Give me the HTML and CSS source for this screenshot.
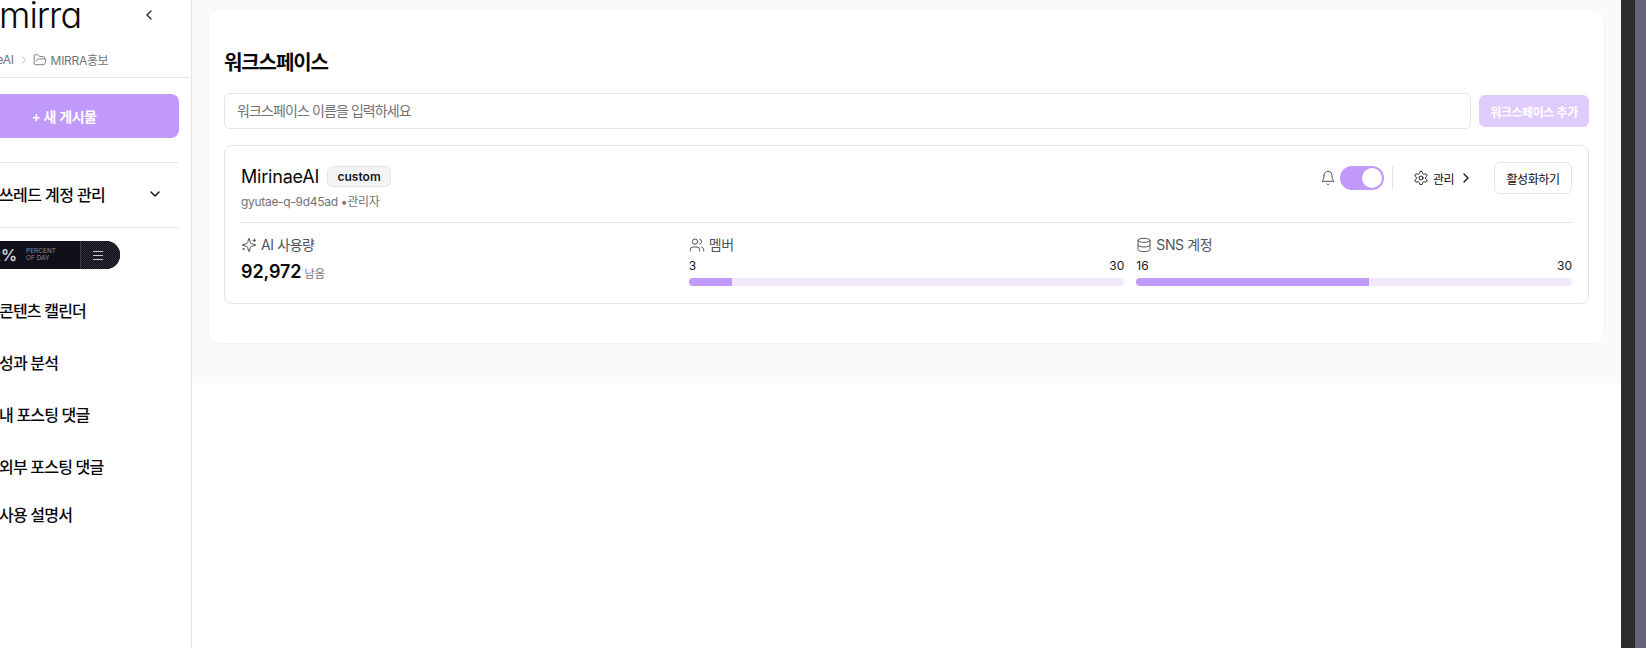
FILE: index.html
```html
<!DOCTYPE html>
<html lang="ko">
<head>
<meta charset="utf-8">
<title>워크스페이스</title>
<link rel="stylesheet" href="styles.css">
</head>
<body>
<div class="app">
  <aside class="sidebar">
    <div class="side-inner">
      <div class="logo-row">
        <span class="logo">mirra</span>
        <svg class="ico-chev-left" viewBox="0 0 24 24"><path d="M15 18l-6-6 6-6"/></svg>
      </div>
      <div class="crumbs">
        <span>MirinaeAI</span>
        <svg class="crumb-sep" viewBox="0 0 24 24"><path d="M9 18l6-6-6-6"/></svg>
        <svg class="crumb-folder" viewBox="0 0 24 24"><path d="M6 14l1.5-2.9A2 2 0 0 1 9.24 10H20a2 2 0 0 1 1.94 2.5l-1.54 6a2 2 0 0 1-1.95 1.5H4a2 2 0 0 1-2-2V5a2 2 0 0 1 2-2h3.9a2 2 0 0 1 1.69.9l.81 1.2a2 2 0 0 0 1.67.9H18a2 2 0 0 1 2 2v2"/></svg>
        <span>MIRRA홍보</span>
      </div>
      <div class="side-body">
        <button class="new-post">+ 새 게시물</button>
        <div class="thread-row">
          <span>쓰레드 계정 관리</span>
          <svg class="ico-chev-down" viewBox="0 0 24 24"><path d="M6 9l6 6 6-6"/></svg>
        </div>
        <div class="meter">
          <span class="meter-value">62%</span>
          <span class="meter-label">PERCENT<br>OF DAY</span>
          <span class="meter-menu"><i></i><i></i><i></i></span>
        </div>
        <nav class="nav">
          <a class="nav-item nav-a">콘텐츠 캘린더</a>
          <a class="nav-item nav-b">성과 분석</a>
          <a class="nav-item nav-b">내 포스팅 댓글</a>
          <a class="nav-item nav-b">외부 포스팅 댓글</a>
          <a class="nav-item nav-c">사용 설명서</a>
        </nav>
      </div>
    </div>
  </aside>

  <div class="content">
    <main class="main">
      <section class="panel">
        <h1 class="title">워크스페이스</h1>
        <div class="add-row">
          <div class="name-input">워크스페이스 이름을 입력하세요</div>
          <button class="add-btn">워크스페이스 추가</button>
        </div>
        <article class="ws-card">
          <header class="ws-head">
            <div class="ws-info">
              <div class="ws-name-row">
                <span class="ws-name">MirinaeAI</span>
                <span class="badge">custom</span>
              </div>
              <div class="ws-sub">gyutae-q-9d45ad •관리자</div>
            </div>
            <div class="ws-actions">
              <svg class="ico-16" viewBox="0 0 24 24"><path d="M6 8a6 6 0 0 1 12 0c0 7 3 9 3 9H3s3-2 3-9"/><path d="M10.3 21a1.94 1.94 0 0 0 3.4 0"/></svg>
              <span class="toggle"><span class="knob"></span></span>
              <span class="vsep"></span>
              <span class="manage">
                <svg class="ico-16 dark" viewBox="0 0 24 24"><path d="M12.22 2h-.44a2 2 0 0 0-2 2v.18a2 2 0 0 1-1 1.73l-.43.25a2 2 0 0 1-2 0l-.15-.08a2 2 0 0 0-2.73.73l-.22.38a2 2 0 0 0 .73 2.73l.15.1a2 2 0 0 1 1 1.72v.51a2 2 0 0 1-1 1.74l-.15.09a2 2 0 0 0-.73 2.73l.22.38a2 2 0 0 0 2.73.73l.15-.08a2 2 0 0 1 2 0l.43.25a2 2 0 0 1 1 1.73V20a2 2 0 0 0 2 2h.44a2 2 0 0 0 2-2v-.18a2 2 0 0 1 1-1.73l.43-.25a2 2 0 0 1 2 0l.15.08a2 2 0 0 0 2.73-.73l.22-.39a2 2 0 0 0-.73-2.73l-.15-.08a2 2 0 0 1-1-1.74v-.5a2 2 0 0 1 1-1.74l.15-.09a2 2 0 0 0 .73-2.73l-.22-.38a2 2 0 0 0-2.73-.73l-.15.08a2 2 0 0 1-2 0l-.43-.25a2 2 0 0 1-1-1.73V4a2 2 0 0 0-2-2z"/><circle cx="12" cy="12" r="3"/></svg>
                <span class="manage-text">관리</span>
                <svg class="ico-chev-right" viewBox="0 0 24 24"><path d="M9 18l6-6-6-6"/></svg>
              </span>
              <button class="activate">활성화하기</button>
            </div>
          </header>
          <div class="stats">
            <div class="stat">
              <div class="stat-label">
                <svg class="ico-16" viewBox="0 0 24 24"><path d="M9.94 15.5A2 2 0 0 0 8.5 14.06l-6.14-1.58a.5.5 0 0 1 0-.96L8.5 9.94A2 2 0 0 0 9.94 8.5l1.58-6.14a.5.5 0 0 1 .96 0l1.58 6.14a2 2 0 0 0 1.44 1.44l6.14 1.58a.5.5 0 0 1 0 .96l-6.14 1.58a2 2 0 0 0-1.44 1.44l-1.58 6.14a.5.5 0 0 1-.96 0z"/><path d="M20 3v4M22 5h-4M4 17v2M5 18H3"/></svg>
                <span>AI 사용량</span>
              </div>
              <div class="usage"><b>92,972</b> <span>남음</span></div>
            </div>
            <div class="stat">
              <div class="stat-label">
                <svg class="ico-16" viewBox="0 0 24 24"><path d="M16 21v-2a4 4 0 0 0-4-4H6a4 4 0 0 0-4 4v2"/><circle cx="9" cy="7" r="4"/><path d="M22 21v-2a4 4 0 0 0-3-3.87M16 3.13a4 4 0 0 1 0 7.75"/></svg>
                <span>멤버</span>
              </div>
              <div class="bar-nums"><span>3</span><span>30</span></div>
              <div class="bar"><div class="bar-fill" style="width:10%"></div></div>
            </div>
            <div class="stat">
              <div class="stat-label">
                <svg class="ico-16" viewBox="0 0 24 24"><ellipse cx="12" cy="5" rx="9" ry="3"/><path d="M3 5v14a9 3 0 0 0 18 0V5"/><path d="M3 12a9 3 0 0 0 18 0"/></svg>
                <span>SNS 계정</span>
              </div>
              <div class="bar-nums"><span>16</span><span>30</span></div>
              <div class="bar"><div class="bar-fill" style="width:53.33%"></div></div>
            </div>
          </div>
        </article>
      </section>
    </main>
  </div>

  <div class="edge-dark"></div>
  <div class="edge-slate"></div>
</div>
</body>
</html>
```

FILE: styles.css
```css
* { box-sizing: border-box; }
html, body { margin: 0; height: 100%; background: #fff; overflow: hidden; }
body {
  font-family: Inter, "Noto Sans CJK KR", sans-serif;
  color: #09090b;
}
svg { fill: none; stroke: currentColor; stroke-width: 2; stroke-linecap: round; stroke-linejoin: round; flex-shrink: 0; }
button { font-family: inherit; cursor: pointer; }

.app { display: flex; height: 648px; width: 1646px; }

/* sidebar: its left part is scrolled out of the window */
.sidebar {
  width: 192px; flex-shrink: 0; height: 648px; overflow: hidden;
  border-right: 1px solid #e4e4e7; background: #fff;
}
.side-inner { width: 254px; margin-left: -63px; }
.logo-row {
  height: 46px; display: flex; align-items: flex-start;
  padding-left: 62px;
}
.logo {
  font-size: 36px; font-weight: 300; line-height: 30px; height: 30px;
  font-feature-settings: "cv11" 1; letter-spacing: -1px; color: #09090b;
}
.ico-chev-left { width: 16px; height: 16px; stroke: #27272a; margin-left: 60px; margin-top: 7px; }
.crumbs {
  height: 32px; display: flex; align-items: center; font-size: 12px; color: #71717a;
  letter-spacing: -0.3px;
  border-bottom: 1px solid #e4e4e7; width: 253px; padding: 0 0 4px 26px;
}
.crumb-sep { width: 12px; height: 12px; margin: 0 3px 0 4px; stroke: #a1a1aa; stroke-width: 1.5; }
.crumb-folder { width: 14px; height: 14px; margin-right: 4px; stroke-width: 1.5; }
.side-body { padding: 16px 12px 0 12px; width: 254px; }
.new-post {
  display: block; width: 230px; height: 44px; border: 0; border-radius: 8px;
  background: #c199fa; color: #fff; font-size: 14px; font-weight: 600; letter-spacing: -0.4px;
}
.thread-row {
  margin-top: 24px; width: 230px; height: 66px; padding: 0 16px 3px 50px;
  border-top: 1px solid #e4e4e7; border-bottom: 1px solid #e4e4e7;
  display: flex; align-items: center; justify-content: space-between;
  font-size: 16px; font-weight: 500; letter-spacing: -0.6px;
}
.ico-chev-down { width: 16px; height: 16px; }
.meter {
  margin: 13px 0 0 0; width: 171px; height: 28px; border-radius: 0 14px 14px 0;
  background: #10101a; display: flex; align-items: center; color: #fff;
}
.meter-value { width: 68px; text-align: right; font-size: 16px; font-weight: 600; color: #d4d4d8; }
.meter-label { margin-left: 9px; width: 54px; font-size: 6.5px; line-height: 7px; color: #8b8b94; }
.meter-menu {
  width: 40px; height: 28px; border-left: 1px solid #3c3c46; border-radius: 0 14px 14px 0;
  display: flex; flex-direction: column; justify-content: center; align-items: center; gap: 3px;
  padding-right: 5px;
  background: repeating-conic-gradient(#10101a 0 25%, #2c2c36 0 50%) 0 0 / 2px 2px;
}
.meter-menu i { display: block; width: 10px; height: 1px; background: #c8c8d0; }

.nav { display: flex; flex-direction: column; margin-left: 50px; }
.nav-item { font-size: 16px; font-weight: 500; line-height: 24px; color: #09090b; display: block; letter-spacing: -0.8px; }
.nav-a { margin-top: 30px; }
.nav-b { margin-top: 28px; }
.nav-c { margin-top: 24px; }

/* main */
.content { width: 1429px; flex-shrink: 0; }
.main { background: #fafafa; height: 383px; padding: 9px 16px 0; }
.panel {
  background: #fff; border: 1px solid #f4f4f5; border-radius: 12px;
  height: 335px; padding: 0 15px;
}
.title { margin: 41px 0 0; font-size: 20px; font-weight: 600; line-height: 24px; height: 24px; color: #09090b; letter-spacing: -1.1px; }
.add-row { display: flex; align-items: center; gap: 8px; margin-top: 18px; }
.name-input {
  flex: 1; height: 36px; border: 1px solid #e4e4e7; border-radius: 6px;
  padding: 0 12px; font-size: 14px; line-height: 34px; color: #71717a; letter-spacing: -0.9px;
}
.add-btn {
  width: 110px; height: 32px; border: 0; border-radius: 6px; background: #e0ccfc;
  color: #fff; font-size: 12px; font-weight: 600; padding: 0; letter-spacing: -0.4px;
}
.ws-card {
  margin-top: 16px; border: 1px solid #e4e4e7; border-radius: 8px;
  height: 159px; padding: 0 16px;
}
.ws-head {
  height: 77px; border-bottom: 1px solid #e4e4e7;
  display: flex; justify-content: space-between; align-items: flex-start;
}
.ws-name-row { display: flex; align-items: center; gap: 8px; margin-top: 20px; height: 21px; }
.ws-name { font-size: 18px; font-weight: 400; letter-spacing: -0.2px; }
.badge {
  height: 21px; width: 64px; border: 1px solid #e4e4e7; border-radius: 6px; background: #f4f4f5;
  font-size: 12px; font-weight: 600; line-height: 19px; text-align: center; color: #18181b;
}
.ws-sub { margin-top: 7px; font-size: 12px; line-height: 16px; color: #71717a; letter-spacing: -0.3px; }
.ws-actions { display: flex; align-items: center; margin-top: 16px; height: 32px; }
.ico-16 { width: 16px; height: 16px; stroke: #52525b; stroke-width: 1.5; }
.ico-16.dark { stroke: #18181b; }
.toggle {
  margin-left: 4px; width: 44px; height: 24px; border-radius: 12px; background: #c199fa;
  display: flex; align-items: center; justify-content: flex-end; padding-right: 2px;
}
.knob { width: 20px; height: 20px; border-radius: 50%; background: #fff; }
.vsep { width: 1px; height: 24px; background: #e4e4e7; margin: 0 20px 0 8px; }
.manage { display: flex; align-items: center; gap: 4px; font-size: 12px; font-weight: 400; }
.manage-text { width: 21px; letter-spacing: -0.5px; white-space: nowrap; }
.ico-chev-right { width: 16px; height: 16px; stroke: #18181b; }
.activate {
  margin-left: 20px; width: 78px; height: 32px; border: 1px solid #e4e4e7; border-radius: 6px;
  background: #fff; color: #09090b; font-size: 12px; font-weight: 400; padding: 0; letter-spacing: -0.4px;
}
.stats { display: grid; grid-template-columns: repeat(3, 1fr); gap: 12px; padding-top: 12px; }
.stat-label { display: flex; align-items: center; gap: 4px; font-size: 14px; line-height: 20px; color: #52525b; height: 20px; letter-spacing: -0.4px; }
.usage { margin-top: 5px; font-size: 11px; line-height: 24px; color: #71717a; }
.usage b { font-size: 18px; font-weight: 600; color: #09090b; letter-spacing: -0.1px; }
.bar-nums { display: flex; justify-content: space-between; font-size: 12px; line-height: 16px; margin-top: 3px; color: #18181b; }
.bar { height: 8px; border-radius: 4px; background: #f1e9fc; overflow: hidden; margin-top: 4px; }
.bar-fill { height: 8px; background: #c199fa; }

.edge-dark { width: 14px; flex-shrink: 0; height: 648px; background: #2e2e2e; }
.edge-slate { width: 11px; flex-shrink: 0; height: 648px; background: #66647a; }
```
